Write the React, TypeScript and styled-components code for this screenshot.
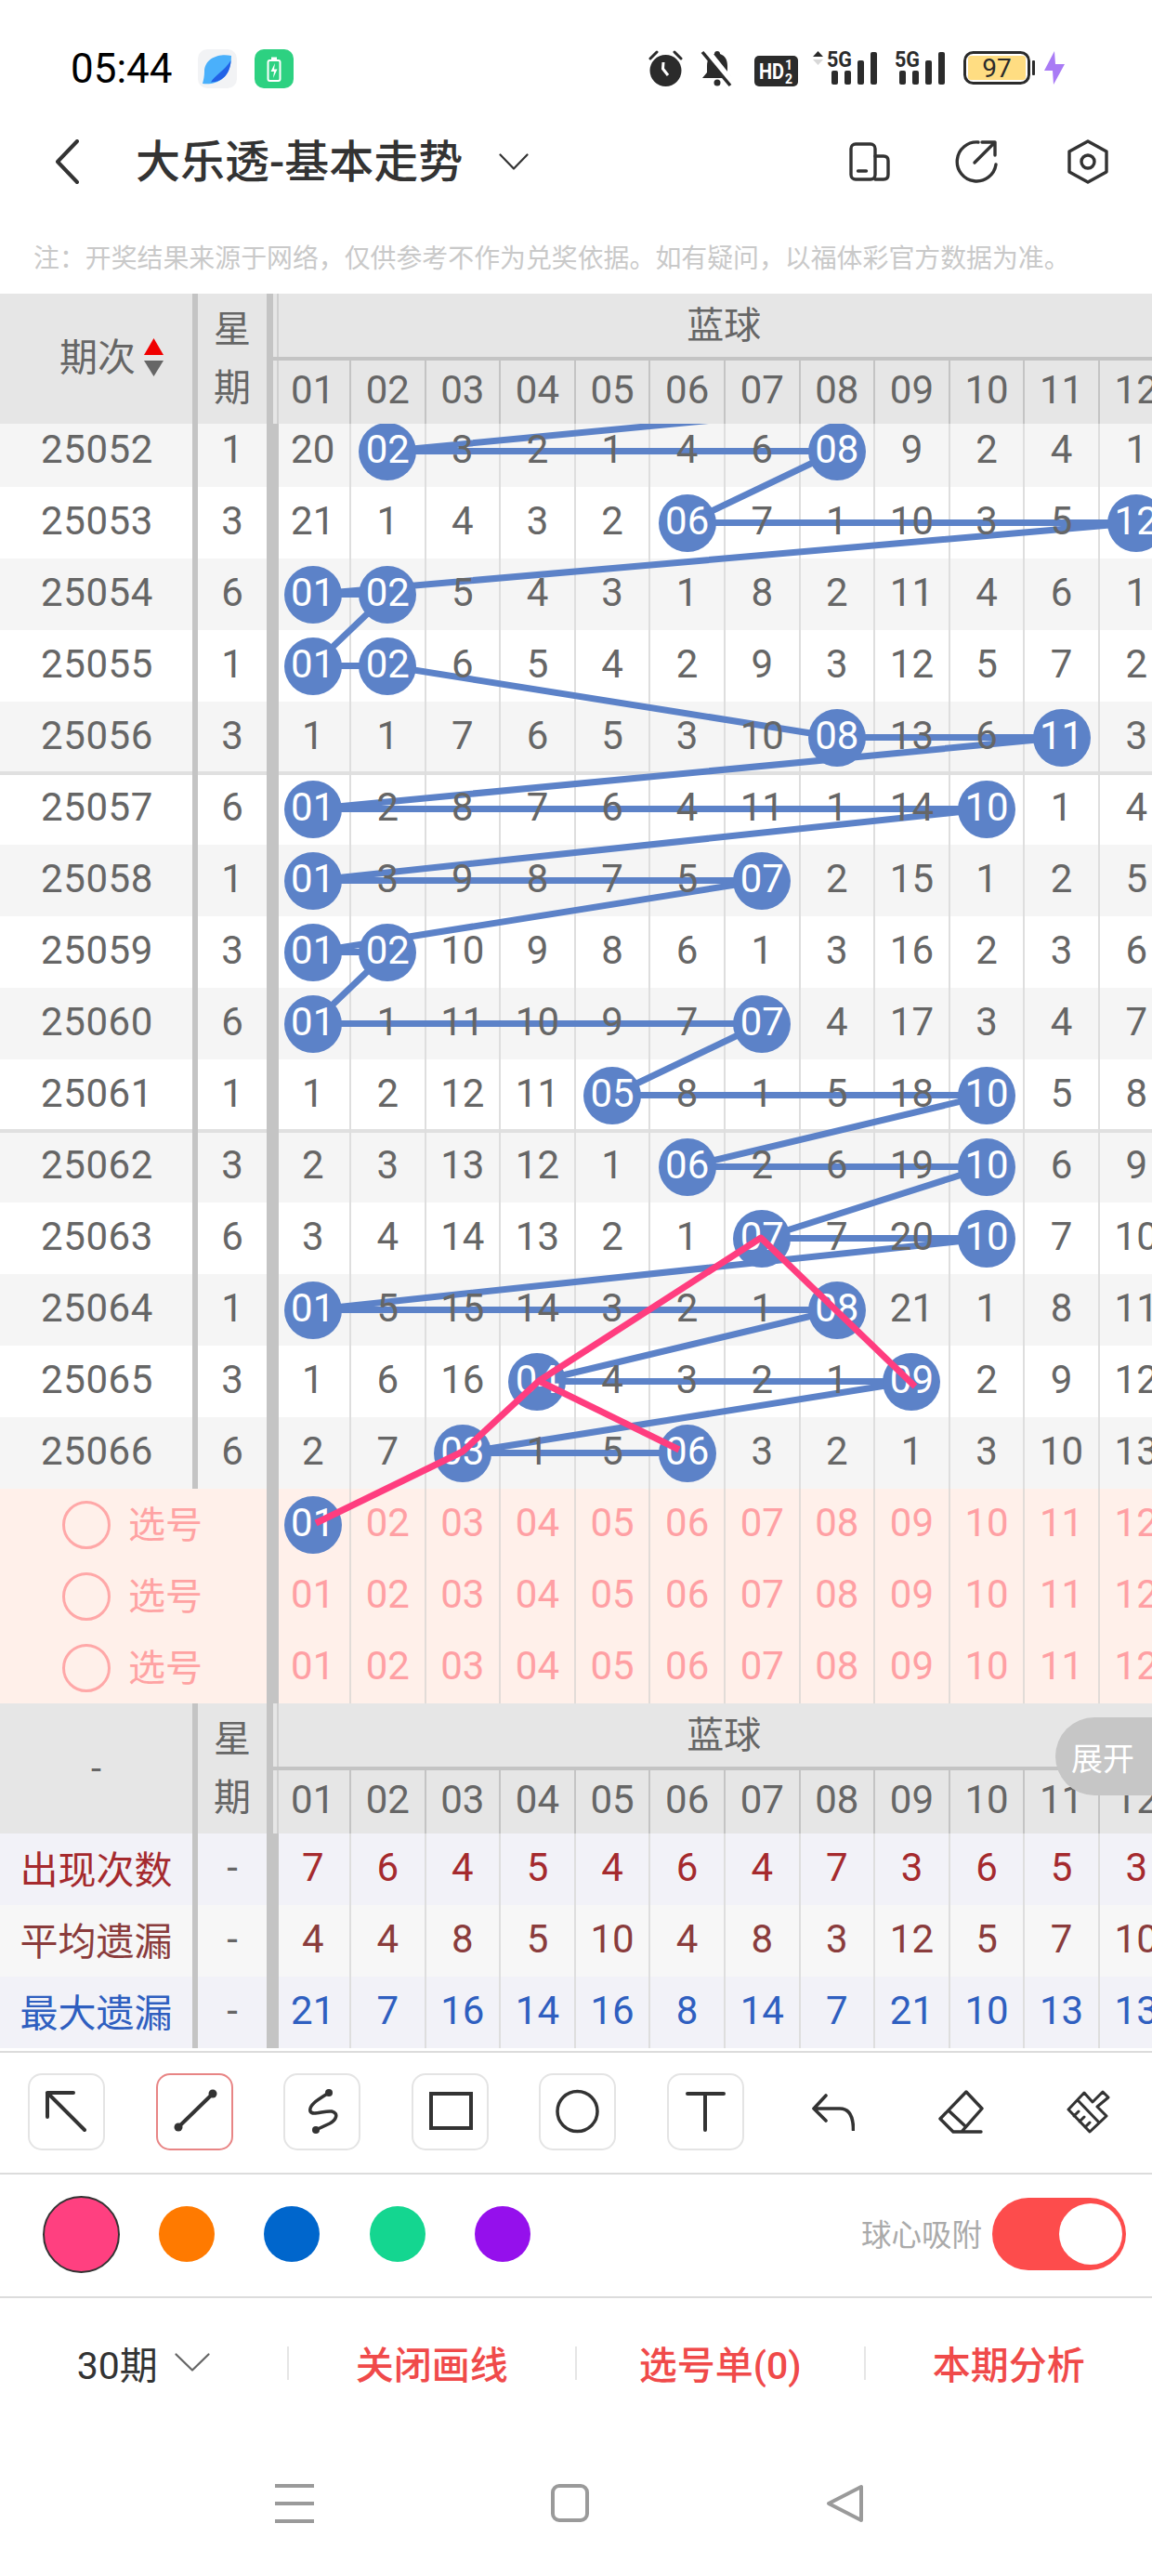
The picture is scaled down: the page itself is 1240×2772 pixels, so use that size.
import React from "react";
import styled, { createGlobalStyle } from "styled-components";

const COL_WIDTH = 80.6;
const ROW_HEIGHT = 77;
const FIRST_COL_CENTER = 336.7;
const BODY_TOP_OFFSET = -9;

type DrawRow = {
  period: string;
  week: number;
  balls: number[];
  cells: number[];
};

// 0 in cells means the column holds a ball
const ROWS: DrawRow[] = [
  { period: "25052", week: 1, balls: [2, 8], cells: [20, 0, 3, 2, 1, 4, 6, 0, 9, 2, 4, 1] },
  { period: "25053", week: 3, balls: [6, 12], cells: [21, 1, 4, 3, 2, 0, 7, 1, 10, 3, 5, 0] },
  { period: "25054", week: 6, balls: [1, 2], cells: [0, 0, 5, 4, 3, 1, 8, 2, 11, 4, 6, 1] },
  { period: "25055", week: 1, balls: [1, 2], cells: [0, 0, 6, 5, 4, 2, 9, 3, 12, 5, 7, 2] },
  { period: "25056", week: 3, balls: [8, 11], cells: [1, 1, 7, 6, 5, 3, 10, 0, 13, 6, 0, 3] },
  { period: "25057", week: 6, balls: [1, 10], cells: [0, 2, 8, 7, 6, 4, 11, 1, 14, 0, 1, 4] },
  { period: "25058", week: 1, balls: [1, 7], cells: [0, 3, 9, 8, 7, 5, 0, 2, 15, 1, 2, 5] },
  { period: "25059", week: 3, balls: [1, 2], cells: [0, 0, 10, 9, 8, 6, 1, 3, 16, 2, 3, 6] },
  { period: "25060", week: 6, balls: [1, 7], cells: [0, 1, 11, 10, 9, 7, 0, 4, 17, 3, 4, 7] },
  { period: "25061", week: 1, balls: [5, 10], cells: [1, 2, 12, 11, 0, 8, 1, 5, 18, 0, 5, 8] },
  { period: "25062", week: 3, balls: [6, 10], cells: [2, 3, 13, 12, 1, 0, 2, 6, 19, 0, 6, 9] },
  { period: "25063", week: 6, balls: [7, 10], cells: [3, 4, 14, 13, 2, 1, 0, 7, 20, 0, 7, 10] },
  { period: "25064", week: 1, balls: [1, 8], cells: [0, 5, 15, 14, 3, 2, 1, 0, 21, 1, 8, 11] },
  { period: "25065", week: 3, balls: [4, 9], cells: [1, 6, 16, 0, 4, 3, 2, 1, 0, 2, 9, 12] },
  { period: "25066", week: 6, balls: [3, 6], cells: [2, 7, 0, 1, 5, 0, 3, 2, 1, 3, 10, 13] },
];

const COLUMNS = Array.from({ length: 12 }, (_, i) => String(i + 1).padStart(2, "0"));

const STATS = [
  { label: "出现次数", color: "#a52a2e", bg: "#f2f2f8", values: [7, 6, 4, 5, 4, 6, 4, 7, 3, 6, 5, 3] },
  { label: "平均遗漏", color: "#8a3c3c", bg: "#f7f7f7", values: [4, 4, 8, 5, 10, 4, 8, 3, 12, 5, 7, 10] },
  { label: "最大遗漏", color: "#2f5fc0", bg: "#f2f2f8", values: [21, 7, 16, 14, 16, 8, 14, 7, 21, 10, 13, 13] },
];

const colX = (ball: number) => FIRST_COL_CENTER + (ball - 1) * COL_WIDTH;
const rowY = (row: number) => BODY_TOP_OFFSET + row * ROW_HEIGHT + ROW_HEIGHT / 2;

const bluePoints: [number, number][] = [[colX(12), rowY(-1)]];
ROWS.forEach((row, i) => row.balls.forEach((b) => bluePoints.push([colX(b), rowY(i)])));

const GlobalStyle = createGlobalStyle`
  html, body {
    margin: 0;
    padding: 0;
    background: #fff;
  }
  body {
    font-family: Roboto, "Noto Sans CJK SC", sans-serif;
  }
  * {
    box-sizing: border-box;
  }
`;

const Page = styled.div`
  width: 1240px;
  height: 2772px;
  display: flex;
  flex-direction: column;
  overflow: hidden;
  background: #fff;
`;

const StatusBar = styled.div`
  flex: none;
  height: 120px;
  padding: 53px 93px 0 76px;
  display: flex;
  align-items: flex-start;
`;

const Clock = styled.span`
  font-size: 44px;
  line-height: 42px;
  color: #000;
  margin-right: 27px;
`;

const AppIcon = styled.span<{ $bg: string }>`
  width: 42px;
  height: 42px;
  margin-right: 19px;
  border-radius: 10px;
  background: ${({ $bg }) => $bg};
  display: flex;
`;

const StatusIcons = styled.div`
  margin-left: auto;
  display: flex;
  align-items: flex-start;
  height: 42px;
`;

const SignalSvg = styled.svg`
  flex: none;
  margin-top: -10px;
`;

const TitleBar = styled.div`
  flex: none;
  height: 108px;
  padding: 0 47px 0 59px;
  display: flex;
  align-items: center;
`;

const Title = styled.h1`
  margin: 2px 39px 0 61px;
  font-size: 48px;
  line-height: 60px;
  font-weight: 500;
  color: #333;
  white-space: nowrap;
`;

const TitleActions = styled.div`
  margin-left: auto;
  display: flex;
  align-items: center;
  gap: 70px;
`;

const Note = styled.p`
  flex: none;
  height: 88px;
  margin: 0;
  padding: 37px 0 0 36px;
  font-size: 27.9px;
  line-height: 28px;
  color: #c9c9c9;
  white-space: nowrap;
`;

const HeaderBlock = styled.div`
  position: relative;
  flex: none;
  height: 140px;
  display: flex;
  background: #e6e6e6;
  color: #666;
  font-size: 40px;
`;

const PeriodHead = styled.div`
  flex: 0 0 213px;
  border-right: 6px solid #c4c4c4;
  display: flex;
  align-items: center;
  justify-content: center;
  gap: 9px;
`;

const SortHead = styled(PeriodHead)`
  justify-content: flex-start;
  padding: 0 0 4px 64px;
  font-size: 41px;
`;

const SortLabel = styled.span`
  padding-bottom: 6px;
`;

const WeekHead = styled.div`
  flex: 0 0 81px;
  border-right: 7px solid #c4c4c4;
  display: flex;
  flex-direction: column;
  align-items: center;
  justify-content: center;
  line-height: 63px;
`;

const BlueHead = styled.div`
  flex: 0 0 968px;
  display: flex;
  flex-direction: column;
  background: linear-gradient(90deg, transparent 4px, #cfcfcf 4px, #cfcfcf 6px, transparent 6px);
`;

const BlueTitle = styled.div`
  height: 72px;
  padding-bottom: 7px;
  border-bottom: 4px solid #c4c4c4;
  display: flex;
  align-items: center;
  justify-content: center;
`;

const HeadColumns = styled.div`
  flex: 1;
  display: flex;
  padding-left: 3.4px;
  font-size: 42px;
`;

const HeadDigit = styled.span`
  margin-bottom: 6px;
`;

const ExpandPill = styled.div`
  position: absolute;
  z-index: 5;
  right: 0;
  top: 15px;
  width: 104px;
  height: 84px;
  padding-left: 17px;
  border-radius: 42px 0 0 42px;
  background: #c6c6c6;
  color: #fff;
  font-size: 34px;
  display: flex;
  align-items: center;
`;

const TableBody = styled.div`
  position: relative;
  flex: none;
  height: 1377px;
  overflow: hidden;
`;

const RowStack = styled.div`
  margin-top: ${BODY_TOP_OFFSET}px;
`;

const Row = styled.div<{ $bg: string; $groupEnd?: boolean; $groupStart?: boolean }>`
  height: ${ROW_HEIGHT}px;
  display: flex;
  background: ${({ $bg }) => $bg};
  color: #666;
  font-size: 42px;
  box-shadow: ${({ $groupEnd, $groupStart }) =>
    $groupEnd ? "inset 0 -2px 0 #e0e0e0" : $groupStart ? "inset 0 2px 0 #e0e0e0" : "none"};
`;

const PeriodCell = styled.div`
  flex: 0 0 213px;
  border-right: 6px solid #c4c4c4;
  padding: 0 0 4px 2px;
  display: flex;
  align-items: center;
  justify-content: center;
  letter-spacing: 0.6px;
`;

const WeekCell = styled.div`
  flex: 0 0 83px;
  border-right: 9px solid #c4c4c4;
  padding-bottom: 4px;
  display: flex;
  align-items: center;
  justify-content: center;
`;

const PickLabel = styled.div`
  flex: 0 0 296px;
  border-right: 9px solid #c4c4c4;
  padding-left: 67px;
  display: flex;
  align-items: center;
  gap: 19px;
  font-size: 40px;
  color: #ffa3a3;
`;

const PickText = styled.span`
  padding-bottom: 6px;
`;

const PickRing = styled.span`
  width: 52px;
  height: 52px;
  border-radius: 50%;
  border: 3px solid #ffa8a8;
`;

const NumberArea = styled.div`
  flex: 0 0 968px;
  display: flex;
  padding-left: 1.4px;
  box-shadow: inset 4px 0 0 #c4c4c4;
`;

const NumberCell = styled.div<{ $line: string }>`
  flex: 0 0 ${COL_WIDTH}px;
  border-right: 2px solid ${({ $line }) => $line};
  display: flex;
  align-items: center;
  justify-content: center;
`;

const Digit = styled.span<{ $color?: string }>`
  position: relative;
  z-index: 2;
  margin-bottom: 4px;
  color: ${({ $color }) => $color ?? "inherit"};
`;

const Ball = styled.span`
  position: relative;
  z-index: 2;
  flex: none;
  width: 62px;
  height: 62px;
  padding-bottom: 4px;
  border-radius: 50%;
  background: #5c82c8;
  color: #fff;
  display: flex;
  align-items: center;
  justify-content: center;
`;

const LineLayer = styled.svg<{ $z: number }>`
  position: absolute;
  left: 0;
  top: 0;
  z-index: ${({ $z }) => $z};
  pointer-events: none;
`;

const StatLabel = styled.div<{ $color: string }>`
  flex: 0 0 213px;
  border-right: 6px solid #c4c4c4;
  padding-bottom: 6px;
  display: flex;
  align-items: center;
  justify-content: center;
  font-size: 41px;
  color: ${({ $color }) => $color};
`;

const ToolBar = styled.div`
  flex: none;
  margin-top: 3px;
  height: 133px;
  padding: 22px 0 0 30px;
  border-top: 2px solid #dcdcdc;
  border-bottom: 2px solid #dcdcdc;
  display: flex;
  align-items: flex-start;
  gap: 54.5px;
`;

const ToolButton = styled.button<{ $active?: boolean }>`
  flex: none;
  width: 83px;
  height: 83px;
  padding: 0;
  border: none;
  border-radius: 15px;
  background: #fff;
  box-shadow: inset 0 0 0 2px ${({ $active }) => ($active ? "#e88585" : "#e4e4e4")};
  display: flex;
`;

const PlainTool = styled.div`
  flex: none;
  width: 83px;
  height: 83px;
  display: flex;
  align-items: center;
  justify-content: center;
`;

const ColorBar = styled.div`
  flex: none;
  height: 133px;
  padding: 0 28px 3px 46px;
  border-bottom: 2px solid #dcdcdc;
  display: flex;
  align-items: center;
`;

const ColorDots = styled.div`
  display: flex;
  align-items: center;
  gap: 42px;
`;

const DotGroup = styled.div`
  display: flex;
  gap: 53.3px;
`;

const ColorDot = styled.span<{ $color: string; $selected?: boolean }>`
  display: block;
  width: ${({ $selected }) => ($selected ? 83 : 60)}px;
  height: ${({ $selected }) => ($selected ? 83 : 60)}px;
  border-radius: 50%;
  background: ${({ $color }) => $color};
  border: ${({ $selected }) => ($selected ? "2px solid #333" : "none")};
`;

const SnapLabel = styled.span`
  margin-left: auto;
  margin-right: 11px;
  padding-bottom: 3px;
  font-size: 32.5px;
  color: #aaa;
`;

const Toggle = styled.div`
  width: 144px;
  height: 78px;
  padding: 6px 4px;
  border-radius: 39px;
  background: #fd4c4c;
  display: flex;
  justify-content: flex-end;
`;

const ToggleKnob = styled.span`
  width: 68px;
  height: 66px;
  border-radius: 50%;
  background: #fff;
`;

const BottomBar = styled.div`
  flex: none;
  height: 140px;
  display: flex;
  align-items: center;
  font-size: 41px;
`;

const BarItem = styled.div<{ $red?: boolean }>`
  flex: 1;
  padding-bottom: 3px;
  display: flex;
  align-items: center;
  justify-content: center;
  gap: 18px;
  color: ${({ $red }) => ($red ? "#f04a4a" : "#333")};
  font-weight: ${({ $red }) => ($red ? 500 : 400)};
  white-space: nowrap;
`;

const BarDivider = styled.span`
  flex: none;
  width: 2px;
  height: 36px;
  background: #e6e6e6;
`;

const NavBar = styled.div`
  flex: 1;
  padding: 60px 0 0 296px;
  display: flex;
  align-items: flex-start;
  gap: 255px;
`;

const MenuGlyph = styled.span`
  width: 42px;
  height: 42px;
  display: flex;
  flex-direction: column;
  justify-content: space-between;
`;

const MenuBar = styled.span`
  display: block;
  height: 4px;
  background: #9a9a9a;
`;

const HomeGlyph = styled.span`
  width: 41px;
  height: 41px;
  border: 4px solid #9a9a9a;
  border-radius: 9px;
`;

const Stroke = { fill: "none", stroke: "#333", strokeLinecap: "round", strokeLinejoin: "round" } as const;

function PlanetIcon() {
  return (
    <svg width="42" height="42" viewBox="0 0 42 42">
      <path d="M36 7 C24 4 7 9 7 24 C7 29 6 33 5 37 C18 39 36 33 36 7 Z" fill="#4ab0fb" />
      <path d="M35.5 12 C35 25 28 35 14 35.5 C18 28 29 23 35.5 12 Z" fill="#2262e6" />
    </svg>
  );
}

function ChargeIcon() {
  return (
    <svg width="42" height="42" viewBox="0 0 42 42">
      <rect x="14.5" y="12" width="13" height="22" rx="2" fill="none" stroke="#fff" strokeWidth="2" />
      <rect x="18" y="8.5" width="6" height="3" fill="#fff" />
      <path d="M22 15 L17.5 24 H21 L20 31 L24.5 21.5 H21 Z" fill="#fff" />
    </svg>
  );
}

function AlarmIcon() {
  return (
    <svg width="56" height="42" viewBox="0 0 56 42">
      <path d="M2 10 L9 3 M28 3 L35 10" stroke="#2b2b2b" strokeWidth="3" strokeLinecap="round" />
      <circle cx="18.5" cy="23" r="17" fill="#2b2b2b" />
      <path d="M16 14 L15.5 21 L21 28" fill="none" stroke="#fff" strokeWidth="3" />
    </svg>
  );
}

function MutedBellIcon() {
  return (
    <svg width="58" height="42" viewBox="0 0 58 42">
      <path
        d="M18 2c2 0 3 1 3 3c6 2 8 7 8 13v7l5 6H2l5-6v-7c0-6 2-11 8-13c0-2 1-3 3-3z"
        fill="#2b2b2b"
      />
      <circle cx="18" cy="36" r="3.5" fill="#2b2b2b" />
      <path d="M7 2 L35 37" stroke="#fff" strokeWidth="7" />
      <path d="M2 3 L32 39" stroke="#2b2b2b" strokeWidth="3.5" />
    </svg>
  );
}

function HdIcon() {
  return (
    <svg width="62" height="42" viewBox="0 0 62 42">
      <rect x="0" y="7" width="47" height="33" rx="5" fill="#2b2b2b" />
      <text x="5" y="32" fontFamily="Roboto" fontWeight="700" fontSize="23" fill="#fff" textLength="27" lengthAdjust="spacingAndGlyphs">
        HD
      </text>
      <text x="33" y="22" fontFamily="Roboto" fontWeight="700" fontSize="14" fill="#fff">
        1
      </text>
      <text x="33" y="37" fontFamily="Roboto" fontWeight="700" fontSize="14" fill="#fff">
        2
      </text>
    </svg>
  );
}

function SignalIcon({ arrows }: { arrows?: boolean }) {
  const left = arrows ? 21 : 4;
  const width = arrows ? 90 : 73;
  return (
    <SignalSvg width={width} height="52" viewBox={`0 -10 ${width} 52`}>
      {arrows && (
        <>
          <path d="M6.5 2 L12 8 H1 Z" fill="#2b2b2b" />
          <path d="M6.5 17 L12 11 H1 Z" fill="#d8d8d8" />
        </>
      )}
      <text
        x={left - 5}
        y="19"
        fontFamily="Roboto"
        fontWeight="700"
        fontSize="24"
        fill="#2b2b2b"
        textLength="27"
        lengthAdjust="spacingAndGlyphs"
      >
        5G
      </text>
      <rect x={left} y="23" width="7" height="15" rx="2" fill="#2b2b2b" />
      <rect x={left + 14} y="23" width="7" height="15" rx="2" fill="#2b2b2b" />
      <rect x={left + 28} y="12" width="7" height="26" rx="2" fill="#2b2b2b" />
      <rect x={left + 42} y="3" width="7" height="35" rx="2" fill="#2b2b2b" />
    </SignalSvg>
  );
}

function BatteryIcon() {
  return (
    <svg width="86" height="42" viewBox="0 0 86 42">
      <rect x="1.5" y="3.5" width="69" height="33" rx="9" fill="#fff" stroke="#2b2b2b" strokeWidth="3" />
      <rect x="5" y="7" width="62" height="26" rx="3" fill="#ffdd82" />
      <text x="36" y="30" textAnchor="middle" fontFamily="Roboto" fontSize="28" fill="#2b2b2b">
        97
      </text>
      <rect x="74" y="12" width="3" height="16" rx="1" fill="#2b2b2b" />
    </svg>
  );
}

function BoltIcon() {
  return (
    <svg width="24" height="42" viewBox="0 0 24 42">
      <path d="M12 2 L1 23 H10 L11 38 L23 16 H13 Z" fill="#a97bf5" />
    </svg>
  );
}

function BackIcon() {
  return (
    <svg width="26" height="48" viewBox="0 0 26 48">
      <path d="M24 2 L3 24 L24 46" {...Stroke} strokeWidth="4" />
    </svg>
  );
}

function ChevronDown({ width, height, color }: { width: number; height: number; color: string }) {
  return (
    <svg width={width} height={height} viewBox={`0 0 ${width} ${height}`}>
      <path d={`M1.5 1.5 L${width / 2} ${height - 1.5} L${width - 1.5} 1.5`} fill="none" stroke={color} strokeWidth="2.2" strokeLinecap="round" strokeLinejoin="round" />
    </svg>
  );
}

function DevicesIcon() {
  return (
    <svg width="44" height="42" viewBox="0 0 44 42">
      <rect x="2" y="2" width="26" height="38" rx="5" {...Stroke} strokeWidth="3.4" />
      <path d="M28 15 H37 Q42 15 42 20 V35 Q42 40 37 40 H28" {...Stroke} strokeWidth="3.4" />
      <path d="M9.5 31 H18.5" {...Stroke} strokeWidth="3.4" />
    </svg>
  );
}

function ShareIcon() {
  return (
    <svg width="51" height="48" viewBox="0 0 51 48">
      <path d="M25 3 A21 21 0 1 0 44 27" {...Stroke} strokeWidth="3.4" />
      <path d="M21 25 L43 3 M29 3 H43 V17" {...Stroke} strokeWidth="3.4" />
    </svg>
  );
}

function HexIcon() {
  return (
    <svg width="44" height="48" viewBox="0 0 44 48">
      <path d="M22 2 L42 13 V35 L22 46 L2 35 V13 Z" {...Stroke} strokeWidth="3.4" />
      <circle cx="22" cy="24" r="7" {...Stroke} strokeWidth="3.4" />
    </svg>
  );
}

function SortIcon() {
  return (
    <svg width="21" height="41" viewBox="0 0 21 41">
      <path d="M10.5 0 L21 18 H0 Z" fill="#f00000" />
      <path d="M0 24 H21 L10.5 41 Z" fill="#666" />
    </svg>
  );
}

function ToolGlyph({ children }: { children: React.ReactNode }) {
  return (
    <svg width="83" height="83" viewBox="0 0 83 83">
      {children}
    </svg>
  );
}

function UndoIcon() {
  return (
    <svg width="46" height="40" viewBox="0 0 46 40">
      <path d="M15 2 L2 16 L15 29 M2 16 H30 C41 16 44.5 26 44.5 39" {...Stroke} strokeWidth="3.6" />
    </svg>
  );
}

function EraserIcon() {
  return (
    <svg width="50" height="50" viewBox="0 0 50 50">
      <path d="M31 3 L48 21 L26 46 H17 L3 32 Z M13 24 L29 39 M17 46 H47" {...Stroke} strokeWidth="3.4" />
    </svg>
  );
}

function BrushIcon() {
  return (
    <svg width="48" height="48" viewBox="0 0 48 48">
      <path
        d="M2 21 L19 3 L28 13 L39 2 L45 8 L33 18 L43 28 L25 45 Z M12 11 L35 35 M8 28 L13 23 M14 34 L19 29 M20 40 L25 35"
        {...Stroke}
        strokeWidth="3"
      />
    </svg>
  );
}

function BackNavIcon() {
  return (
    <svg width="41" height="42" viewBox="0 0 41 42">
      <path d="M38 3 V39 L3 21 Z" fill="none" stroke="#9a9a9a" strokeWidth="4" strokeLinejoin="round" />
    </svg>
  );
}

function TrendHeader({ periodHead, pill }: { periodHead: React.ReactNode; pill?: boolean }) {
  return (
    <HeaderBlock>
      {periodHead}
      <WeekHead>
        <span>星</span>
        <span>期</span>
      </WeekHead>
      <BlueHead>
        <BlueTitle>蓝球</BlueTitle>
        <HeadColumns>
          {COLUMNS.map((c) => (
            <NumberCell key={c} $line="#c4c4c4">
              <HeadDigit>{c}</HeadDigit>
            </NumberCell>
          ))}
        </HeadColumns>
      </BlueHead>
      {pill && <ExpandPill>展开</ExpandPill>}
    </HeaderBlock>
  );
}

export default function App(): JSX.Element {
  return (
    <Page>
      <GlobalStyle />
      <StatusBar>
        <Clock>05:44</Clock>
        <AppIcon $bg="#f2f3f5">
          <PlanetIcon />
        </AppIcon>
        <AppIcon $bg="#2dd181">
          <ChargeIcon />
        </AppIcon>
        <StatusIcons>
          <AlarmIcon />
          <MutedBellIcon />
          <HdIcon />
          <SignalIcon arrows />
          <SignalIcon />
          <BatteryIcon />
          <BoltIcon />
        </StatusIcons>
      </StatusBar>

      <TitleBar>
        <BackIcon />
        <Title>大乐透-基本走势</Title>
        <ChevronDown width={32} height={18} color="#333" />
        <TitleActions>
          <DevicesIcon />
          <ShareIcon />
          <HexIcon />
        </TitleActions>
      </TitleBar>

      <Note>注：开奖结果来源于网络，仅供参考不作为兑奖依据。如有疑问，以福体彩官方数据为准。</Note>

      <TrendHeader
        periodHead={
          <SortHead>
            <SortLabel>期次</SortLabel>
            <SortIcon />
          </SortHead>
        }
      />

      <TableBody>
        <LineLayer $z={1} width="1240" height="1377">
          <polyline
            points={bluePoints.map((p) => p.join(",")).join(" ")}
            fill="none"
            stroke="#5c82c8"
            strokeWidth="7"
            strokeLinejoin="round"
          />
        </LineLayer>
        <RowStack>
          {ROWS.map((row, i) => (
            <Row key={row.period} $bg={i % 2 === 0 ? "#f5f5f5" : "#fff"} $groupEnd={i === 4 || i === 9} $groupStart={i === 5 || i === 10}>
              <PeriodCell>{row.period}</PeriodCell>
              <WeekCell>{row.week}</WeekCell>
              <NumberArea>
                {row.cells.map((value, c) => (
                  <NumberCell key={c} $line="#dedede">
                    {value === 0 ? <Ball>{COLUMNS[c]}</Ball> : <Digit>{value}</Digit>}
                  </NumberCell>
                ))}
              </NumberArea>
            </Row>
          ))}
          {[0, 1, 2].map((r) => (
            <Row key={r} $bg="#fff0ea">
              <PickLabel>
                <PickRing />
                <PickText>选号</PickText>
              </PickLabel>
              <NumberArea>
                {COLUMNS.map((c, idx) => (
                  <NumberCell key={c} $line="#e2dcd8">
                    {r === 0 && idx === 0 ? <Ball>{c}</Ball> : <Digit $color="#ffa0a4">{c}</Digit>}
                  </NumberCell>
                ))}
              </NumberArea>
            </Row>
          ))}
        </RowStack>
        <LineLayer $z={3} width="1240" height="1377">
          <polyline
            points="340,1183 498,1106 580,1030 819,876 985,1036"
            fill="none"
            stroke="#ff3d7f"
            strokeWidth="7"
            strokeLinejoin="round"
          />
          <line x1="580" y1="1030" x2="731" y2="1104" stroke="#ff3d7f" strokeWidth="7" />
        </LineLayer>
      </TableBody>

      <TrendHeader periodHead={<PeriodHead>-</PeriodHead>} pill />

      {STATS.map((stat) => (
        <Row key={stat.label} $bg={stat.bg}>
          <StatLabel $color={stat.color}>{stat.label}</StatLabel>
          <WeekCell>-</WeekCell>
          <NumberArea>
            {stat.values.map((value, c) => (
              <NumberCell key={c} $line="#dedede">
                <Digit $color={stat.color}>{value}</Digit>
              </NumberCell>
            ))}
          </NumberArea>
        </Row>
      ))}

      <ToolBar>
        <ToolButton>
          <ToolGlyph>
            <path d="M21 21 H49 M21 21 V47 M21 21 L61 61" {...Stroke} strokeWidth="4" />
          </ToolGlyph>
        </ToolButton>
        <ToolButton $active>
          <ToolGlyph>
            <path d="M24 58 L61 22" {...Stroke} strokeWidth="4" />
            <circle cx="24" cy="58" r="4.5" fill="#333" />
            <circle cx="61" cy="22" r="4.5" fill="#333" />
          </ToolGlyph>
        </ToolButton>
        <ToolButton>
          <ToolGlyph>
            <path d="M49 21 C38 28 27 34 29 41 C31 46 44 40 52 41 C60 43 57 50 50 54 L35 61" {...Stroke} strokeWidth="3.5" />
            <circle cx="49" cy="21" r="4" fill="#333" />
            <circle cx="35" cy="61" r="4" fill="#333" />
          </ToolGlyph>
        </ToolButton>
        <ToolButton>
          <ToolGlyph>
            <rect x="21" y="22" width="43" height="37" fill="none" stroke="#333" strokeWidth="4" />
          </ToolGlyph>
        </ToolButton>
        <ToolButton>
          <ToolGlyph>
            <circle cx="41.5" cy="41" r="21.5" fill="none" stroke="#333" strokeWidth="3.5" />
          </ToolGlyph>
        </ToolButton>
        <ToolButton>
          <ToolGlyph>
            <path d="M22 22 H61 M41 22 V61" {...Stroke} strokeWidth="4" />
          </ToolGlyph>
        </ToolButton>
        <PlainTool>
          <UndoIcon />
        </PlainTool>
        <PlainTool>
          <EraserIcon />
        </PlainTool>
        <PlainTool>
          <BrushIcon />
        </PlainTool>
      </ToolBar>

      <ColorBar>
        <ColorDots>
          <ColorDot $color="#ff4080" $selected />
          <DotGroup>
            <ColorDot $color="#ff7a00" />
            <ColorDot $color="#0066cc" />
            <ColorDot $color="#14d690" />
            <ColorDot $color="#9510ec" />
          </DotGroup>
        </ColorDots>
        <SnapLabel>球心吸附</SnapLabel>
        <Toggle>
          <ToggleKnob />
        </Toggle>
      </ColorBar>

      <BottomBar>
        <BarItem>
          30期
          <ChevronDown width={38} height={20} color="#666" />
        </BarItem>
        <BarDivider />
        <BarItem $red>关闭画线</BarItem>
        <BarDivider />
        <BarItem $red>选号单(0)</BarItem>
        <BarDivider />
        <BarItem $red>本期分析</BarItem>
      </BottomBar>

      <NavBar>
        <MenuGlyph>
          <MenuBar />
          <MenuBar />
          <MenuBar />
        </MenuGlyph>
        <HomeGlyph />
        <BackNavIcon />
      </NavBar>
    </Page>
  );
}
